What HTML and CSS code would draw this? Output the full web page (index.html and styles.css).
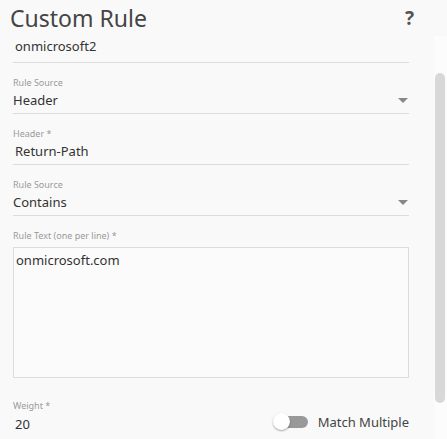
FILE: index.html
```html
<!DOCTYPE html>
<html>
<head>
<meta charset="utf-8">
<link rel="stylesheet" href="styles.css">
</head>
<body>
<div class="dialog">
  <div class="title-row">
    <h1 class="title">Custom Rule</h1>
    <span class="help">?</span>
  </div>
  <div class="scroll-area">
    <div class="form">
      <div class="field field-name">
        <div class="value">onmicrosoft2</div>
      </div>
      <div class="field">
        <div class="label">Rule Source</div>
        <div class="value select">Header<span class="caret"></span></div>
      </div>
      <div class="field">
        <div class="label">Header *</div>
        <div class="value indent">Return-Path</div>
      </div>
      <div class="field">
        <div class="label">Rule Source</div>
        <div class="value select">Contains<span class="caret"></span></div>
      </div>
      <div class="field area-field">
        <div class="label">Rule Text (one per line) *</div>
        <div class="textarea">onmicrosoft.com</div>
      </div>
      <div class="bottom-row">
        <div class="weight">
          <div class="label">Weight *</div>
          <div class="weight-value">20</div>
        </div>
        <div class="toggle-wrap">
          <span class="toggle"><span class="track"></span><span class="knob"></span></span>
          <span class="toggle-label">Match Multiple</span>
        </div>
      </div>
    </div>
    <div class="scrollbar"><div class="thumb"></div></div>
  </div>
</div>
</body>
</html>
```
FILE: styles.css
```css
html, body {
  margin: 0;
  padding: 0;
  background: #f9f9f9;
  font-family: "Noto Sans", "Open Sans", sans-serif;
  color: #333;
  overflow: hidden;
}
.dialog {
  width: 447px;
  height: 439px;
}
.title-row {
  display: flex;
  align-items: center;
  justify-content: space-between;
  padding: 0 33px 0 10px;
  height: 36px;
}
.title {
  margin: 0;
  font-weight: 400;
  font-size: 23px;
  color: #444;
  line-height: 36px;
}
.help {
  font-size: 19px;
  font-weight: 700;
  color: #555;
}
.scroll-area {
  display: flex;
  height: 403px;
}
.form {
  width: 396px;
  padding-left: 13px;
}
.field {
  border-bottom: 1px solid #dcdcdc;
}
.field-name .value {
  padding-left: 2px;
  line-height: 20px;
  height: 26px;
}
.label {
  font-size: 9px;
  color: #9a9a9a;
  line-height: 12px;
  margin-top: 14px;
}
.value {
  font-size: 13px;
  line-height: 22px;
  height: 24px;
  position: relative;
  color: #333;
}
.indent { padding-left: 2px; }
.select .caret {
  position: absolute;
  right: 1px;
  top: 9px;
  width: 0;
  height: 0;
  border-left: 5px solid transparent;
  border-right: 5px solid transparent;
  border-top: 5px solid #888;
}
.area-field {
  border-bottom: none;
}
.textarea {
  margin-top: 5px;
  border: 1px solid #dcdcdc;
  height: 122px;
  padding: 3px 2px 4px;
  font-size: 13px;
  line-height: 18px;
  color: #333;
  background: #fbfbfb;
}
.bottom-row {
  display: flex;
  justify-content: space-between;
  align-items: flex-end;
}
.weight .label { margin-top: 22px; }
.weight-value {
  margin-top: 3px;
  font-size: 13px;
  padding-left: 2px;
  line-height: 18px;
}
.toggle-wrap {
  display: flex;
  align-items: center;
  margin-bottom: 2px;
}
.toggle {
  position: relative;
  width: 36px;
  height: 18px;
  margin-right: 9px;
}
.track {
  position: absolute;
  left: 8px;
  top: 3px;
  width: 27px;
  height: 12px;
  border-radius: 6px;
  background: #999;
}
.knob {
  position: absolute;
  left: 0;
  top: 0;
  width: 17px;
  height: 17px;
  border-radius: 50%;
  background: #fff;
  box-shadow: 0 1px 2px rgba(0,0,0,0.35);
}
.toggle-label {
  font-size: 13px;
  color: #444;
}
.scrollbar {
  margin-left: 25px;
  width: 13px;
  background: #fcfcfc;
  padding: 37px 1px 0 1px;
  box-sizing: border-box;
}
.thumb {
  width: 10px;
  height: 330px;
  border-radius: 5px;
  background: #d8d8d8;
}
```
